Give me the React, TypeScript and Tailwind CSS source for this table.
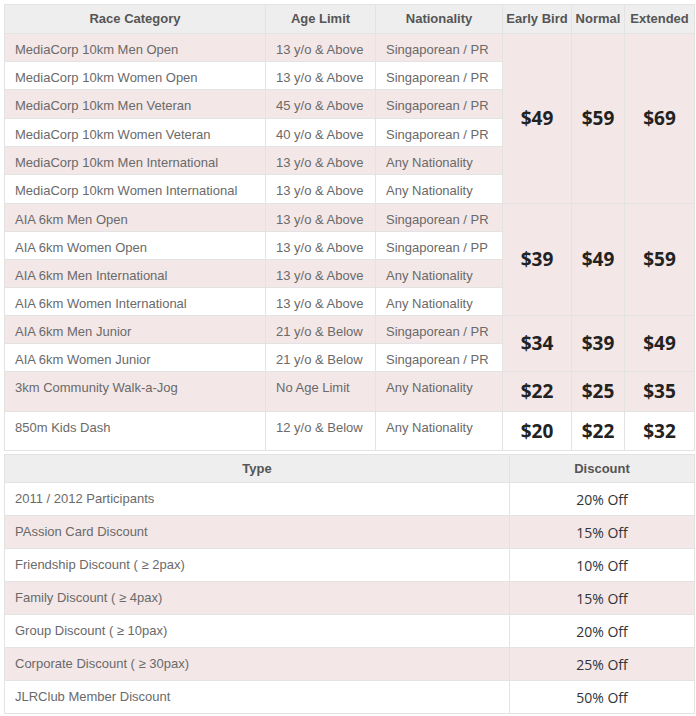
import React from 'react';

type Row = { cat: string; age: string; nat: string; pink: boolean; h: string };

const rows: Row[] = [
  { cat: 'MediaCorp 10km Men Open', age: '13 y/o & Above', nat: 'Singaporean / PR', pink: true, h: 'h-[28px]' },
  { cat: 'MediaCorp 10km Women Open', age: '13 y/o & Above', nat: 'Singaporean / PR', pink: false, h: 'h-[28px]' },
  { cat: 'MediaCorp 10km Men Veteran', age: '45 y/o & Above', nat: 'Singaporean / PR', pink: true, h: 'h-[29px]' },
  { cat: 'MediaCorp 10km Women Veteran', age: '40 y/o & Above', nat: 'Singaporean / PR', pink: false, h: 'h-[28px]' },
  { cat: 'MediaCorp 10km Men International', age: '13 y/o & Above', nat: 'Any Nationality', pink: true, h: 'h-[28px]' },
  { cat: 'MediaCorp 10km Women International', age: '13 y/o & Above', nat: 'Any Nationality', pink: false, h: 'h-[29px]' },
  { cat: 'AIA 6km Men Open', age: '13 y/o & Above', nat: 'Singaporean / PR', pink: true, h: 'h-[28px]' },
  { cat: 'AIA 6km Women Open', age: '13 y/o & Above', nat: 'Singaporean / PP', pink: false, h: 'h-[28px]' },
  { cat: 'AIA 6km Men International', age: '13 y/o & Above', nat: 'Any Nationality', pink: true, h: 'h-[28px]' },
  { cat: 'AIA 6km Women International', age: '13 y/o & Above', nat: 'Any Nationality', pink: false, h: 'h-[28px]' },
  { cat: 'AIA 6km Men Junior', age: '21 y/o & Below', nat: 'Singaporean / PR', pink: true, h: 'h-[28px]' },
  { cat: 'AIA 6km Women Junior', age: '21 y/o & Below', nat: 'Singaporean / PR', pink: false, h: 'h-[28px]' },
  { cat: '3km Community Walk-a-Jog', age: 'No Age Limit', nat: 'Any Nationality', pink: true, h: 'h-[40px]' },
  { cat: '850m Kids Dash', age: '12 y/o & Below', nat: 'Any Nationality', pink: false, h: 'h-[39px]' },
];

// price groups keyed by the first row index they start on
const prices: Record<number, { span: number; p: string[]; pink: boolean }> = {
  0: { span: 6, p: ['$49', '$59', '$69'], pink: true },
  6: { span: 4, p: ['$39', '$49', '$59'], pink: true },
  10: { span: 2, p: ['$34', '$39', '$49'], pink: true },
  12: { span: 1, p: ['$22', '$25', '$35'], pink: true },
  13: { span: 1, p: ['$20', '$22', '$32'], pink: false },
};

const discounts = [
  ['2011 / 2012 Participants', '20% Off'],
  ['PAssion Card Discount', '15% Off'],
  ['Friendship Discount ( ≥ 2pax)', '10% Off'],
  ['Family Discount ( ≥ 4pax)', '15% Off'],
  ['Group Discount ( ≥ 10pax)', '20% Off'],
  ['Corporate Discount ( ≥ 30pax)', '25% Off'],
  ['JLRClub Member Discount', '50% Off'],
];

const th = "border border-[#e3e3e3] bg-[#eeeeee] text-[13px] font-bold text-[#555] text-center align-middle px-0 whitespace-nowrap";
const td = "border border-[#e3e3e3] text-[13px] text-[#6a6a6a] align-top px-[10px] pt-[6px] whitespace-nowrap";
const price = "border border-[#e3e3e3] text-center align-middle px-0 text-[19px] font-bold text-[#222] font-['Open_Sans',sans-serif]";

export default function App() {
  return (
    <div className="w-[696px] h-[716px] bg-white pl-[4px] pt-[4px] font-['Liberation_Sans',Arial,sans-serif]">
      <table className="w-[690px] border-collapse table-fixed">
        <colgroup>
          <col className="w-[261px]" />
          <col className="w-[110px]" />
          <col className="w-[127px]" />
          <col className="w-[69px]" />
          <col className="w-[53px]" />
          <col className="w-[70px]" />
        </colgroup>
        <thead>
          <tr className="h-[29px]">
            <th className={th}>Race Category</th>
            <th className={th}>Age Limit</th>
            <th className={th}>Nationality</th>
            <th className={th}>Early Bird</th>
            <th className={th}>Normal</th>
            <th className={th}>Extended</th>
          </tr>
        </thead>
        <tbody>
          {rows.map((r, i) => {
            const bg = r.pink ? 'bg-[#f3e7e7]' : 'bg-white';
            const g = prices[i];
            return (
              <tr key={i} className={r.h}>
                <td className={`${td} ${bg}`}>{r.cat}</td>
                <td className={`${td} ${bg}`}>{r.age}</td>
                <td className={`${td} ${bg}`}>{r.nat}</td>
                {g &&
                  g.p.map((p, j) => (
                    <td key={j} rowSpan={g.span} className={`${price} ${g.pink ? 'bg-[#f3e7e7]' : 'bg-white'}`}>
                      {p}
                    </td>
                  ))}
              </tr>
            );
          })}
        </tbody>
      </table>

      <table className="w-[690px] border-collapse table-fixed mt-[3px]">
        <colgroup>
          <col className="w-[505px]" />
          <col className="w-[185px]" />
        </colgroup>
        <thead>
          <tr className="h-[28px]">
            <th className={th}>Type</th>
            <th className={th}>Discount</th>
          </tr>
        </thead>
        <tbody>
          {discounts.map(([t, d], i) => {
            const bg = i % 2 === 1 ? 'bg-[#f3e7e7]' : 'bg-white';
            return (
              <tr key={i} className="h-[33px]">
                <td className={`border border-[#e3e3e3] ${bg} text-[13px] text-[#6a6a6a] align-middle px-[10px]`}>{t}</td>
                <td className={`border border-[#e3e3e3] ${bg} text-[14px] text-[#333] text-center align-middle font-['Open_Sans',sans-serif]`}>
                  {d}
                </td>
              </tr>
            );
          })}
        </tbody>
      </table>
    </div>
  );
}
